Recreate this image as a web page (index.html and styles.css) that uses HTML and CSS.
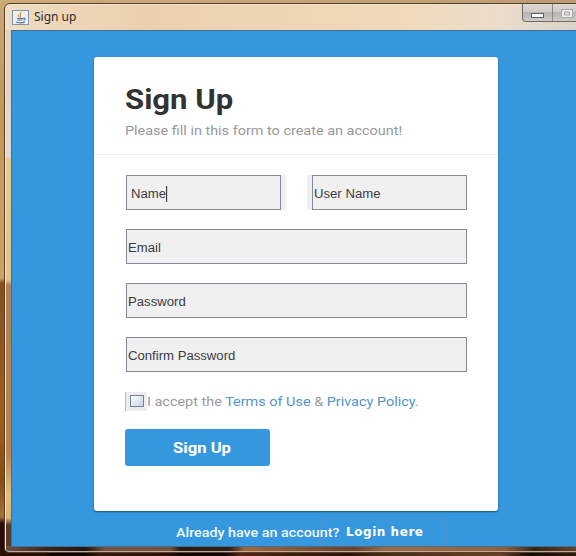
FILE: index.html
```html
<!DOCTYPE html>
<html lang="en">
<head>
<meta charset="utf-8">
<title>Sign up</title>
<link rel="stylesheet" href="styles.css">
</head>
<body>
<div class="window">
  <header class="titlebar">
    <svg class="app-icon" width="17" height="15" viewBox="0 0 17 15">
      <rect x=".5" y=".5" width="16" height="14" fill="#edf0f3" stroke="#8794a5"/>
      <path d="M9.500 2C6 4 10.500 5 8 7.500M7 4.500c-2 1.500.5 2 0 3" fill="none" stroke="#d79543" stroke-width="1.200"/>
      <path d="M5 8.500h6M5.500 10h5M4 12c3 1 7 1 9-.3M11 8.300c3-.7 3 1.500.5 2" fill="none" stroke="#5779a0" stroke-width="1.100"/>
    </svg>
    <span class="title">Sign up</span>
    <div class="controls">
      <div class="control"><svg width="13" height="5"><rect x=".5" y=".5" width="12" height="4" fill="#fff" stroke="#5d6069"/></svg></div>
      <div class="control control-max"><svg width="12" height="9"><rect x=".5" y=".5" width="11" height="8" fill="#efedeb" stroke="#aaa8a5"/><rect x="3.500" y="3" width="5" height="3" fill="#ddd" stroke="#aaa8a5"/></svg></div>
    </div>
  </header>
  <main class="content">
    <form class="card">
      <div class="heading">
        <h1><span class="wide">Sign Up</span></h1>
        <p><span class="wide subtitle">Please fill in this form to create an account!</span></p>
      </div>
      <div class="fields">
        <div class="row">
          <div class="half half-left"><div class="field focused"><span class="wide name">Name</span></div></div>
          <div class="half half-right"><div class="field"><span class="wide">User Name</span></div></div>
        </div>
        <div class="field"><span class="wide">Email</span></div>
        <div class="field"><span class="wide">Password</span></div>
        <div class="field"><span class="wide">Confirm Password</span></div>
      </div>
      <div class="terms">
        <span class="check-wrap"><span class="check"></span></span>
        <span class="wide accept">I accept the <a>Terms of Use</a> &amp; <a>Privacy Policy</a>.</span>
      </div>
      <div class="submit"><span class="wide">Sign Up</span></div>
    </form>
    <footer class="footer">
      <span class="question"><span class="wide">Already have an account?</span></span>
      <span class="login"><span class="login-label">Login here</span></span>
    </footer>
  </main>
</div>
</body>
</html>
```
FILE: styles.css
```css
* { box-sizing: border-box; }
body {
  margin: 0;
  width: 576px;
  height: 556px;
  overflow: hidden;
  padding: 3px 0 3px 4px;
  font-family: Roboto, sans-serif;
  background:
    linear-gradient(90deg, #2a0e05, #2a0e05 45px, #0d0605 50px, #0d0605 85px, #38180c 100px, #2b1007 170px, #0d0605 180px, #0d0605 225px, #55250f 240px, #2b1308 350px, #4a2912 380px, #6b4124 500px, #160a06 530px, #30190d) 0 552px / 576px 4px no-repeat,
    linear-gradient(90deg, #cfaa79, #bd9c74) 0 0 / 576px 3px no-repeat,
    linear-gradient(#cba775, #c09854 110px, #d2a35f 278px, #87501a 283px, #a35e16 420px, #894a14 480px, #a57238 517px, #2a0e05 523px, #2a0e05);
}
.window {
  width: 580px;
  height: 550px;
  border: 1px solid #544030;
  border-radius: 6px 0 0 5px;
  padding: 0 0 0 6px;
  box-shadow: inset 1px 1px 0 #f4e5cd, inset 0 -1px 0 #c3aa98;
  background:
    linear-gradient(90deg, #6b5143, #3a2a22 40px, #20150f 80px, #775442 100px, #755340 165px, #2a1b13 175px, #30201a 225px, #a1663f 240px, #68432d 350px, #9b6b48 380px, #8d6343 500px, #38241a 530px, #6d4933) 0 542px / 580px 8px no-repeat,
    linear-gradient(90deg, #efdcc4, #ebd0ad 140px, #f0dabb 400px, #eadccc 500px, #d9d2ca) 0 0 / 580px 26px no-repeat,
    linear-gradient(#e4d0b5, #e5dacd 152px, #e6c993 156px, #e5c48c 276px, #b28156 281px, #ba834f 450px, #e7bd7b 490px, #dcb477 514px, #553b2b 521px, #553b2b);
}
.titlebar {
  height: 26px;
  display: flex;
  align-items: flex-start;
}
.app-icon { margin: 6px 0 0 1px; }
.title {
  margin: 5px 0 0 5px;
  font: 12px/16px "Noto Sans", sans-serif;
  color: #2f2b28;
}
.controls {
  display: flex;
  margin-left: auto;
  margin-right: -2px;
  height: 18px;
  border: 1px solid #706a66;
  border-top: 0;
  border-radius: 0 0 0 4px;
  background: linear-gradient(#dfdad5, #d0cac7 45%, #b8b3b0 50%, #cfcac5);
}
.control { width: 29px; display: flex; justify-content: center; padding-top: 9px; }
.control-max { width: 32px; border-left: 1px solid #8e8884; padding: 5px 3px 0 0; }
.content {
  height: 517px;
  border: solid #446f93;
  border-width: 1px 0 1px 1px;
  background: #3598de;
  padding: 26px 0 0 82px;
}
.card {
  width: 404px;
  height: 454px;
  background: #fff;
  border-radius: 3px;
  box-shadow: 0 1px 2px #24516f;
}
.wide {
  display: inline-block;
  transform: scaleX(1.11);
  transform-origin: left center;
  white-space: nowrap;
}
.heading {
  height: 98px;
  padding: 27px 0 0 31px;
  border-bottom: 1px solid #e9edef;
}
h1 { margin: 0; font-size: 28px; line-height: 32px; color: #333; }
p { margin: 5px 0 0; font-size: 13px; line-height: 20px; color: #999; }
.fields {
  display: flex;
  flex-direction: column;
  gap: 19px;
  padding: 20px 31px 0 32px;
}
.row { display: flex; justify-content: space-between; }
.half { width: 160px; background: #f0f0f3; }
.half-left { padding-right: 5px; }
.half-right { padding-left: 5px; }
.field {
  height: 35px;
  display: flex;
  align-items: center;
  border: 1px solid #858a9b;
  background: #f0f0f1;
  padding: 2px 0 0 1px;
  font: 12px/16px "Liberation Sans", sans-serif;
  color: #3b3b3e;
}
.focused { padding-left: 4px; }
.name { border-right: 1px solid #333; }
.fields .wide { transform: scaleX(1.095); }
.terms {
  height: 22px;
  margin: 18px 0 0 31px;
  display: flex;
  align-items: center;
  font-size: 13px;
  color: #999;
}
.check-wrap {
  width: 22px;
  height: 19px;
  display: flex;
  align-items: center;
  justify-content: center;
  background: #ededf0;
  border-left: 1px solid #bbb;
}
.check {
  width: 14px;
  height: 12px;
  border: 1px solid #6f819c;
  background: linear-gradient(135deg, #fff, #c5d2e5);
}
a { color: #5592cf; }
.submit {
  width: 145px;
  height: 37px;
  margin: 17px 0 0 31px;
  padding: 1px 0 0 48px;
  display: flex;
  align-items: center;
  border-radius: 3px;
  background: #3598de;
  color: #fff;
  font-size: 15px;
  font-weight: bold;
}
.footer {
  display: flex;
  height: 32px;
  padding-left: 82px;
  color: #eef8ff;
}
.question { width: 144px; font-size: 13px; font-weight: 500; line-height: 22px; margin-top: 11px; }
.question .wide { transform: scaleX(1.1); }
.login {
  width: 127px;
  height: 28px;
  margin-top: 7px;
  padding-left: 25px;
  border: 1px solid #4a92cb;
  font: bold 12px/26px "DejaVu Sans", sans-serif;
  letter-spacing: .55px;
  color: #fff;
}
.login-label { white-space: nowrap; }
```
